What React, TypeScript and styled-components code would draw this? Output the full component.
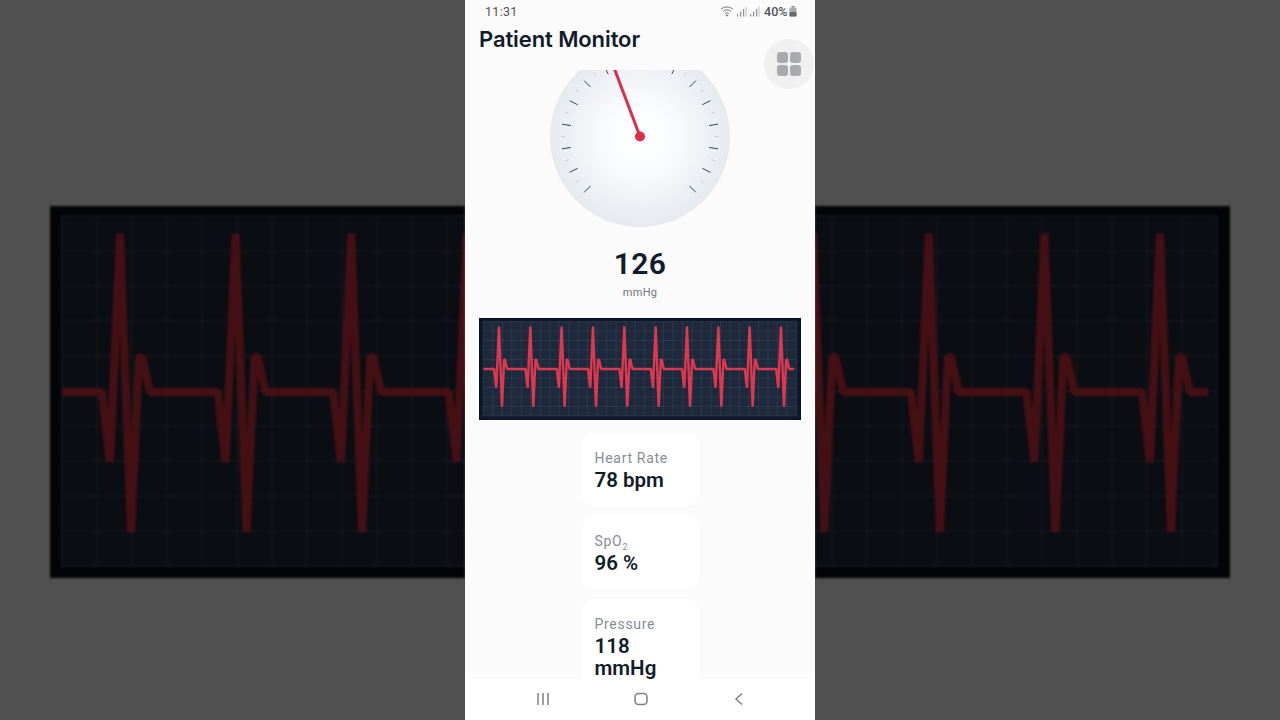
import styled, { createGlobalStyle } from 'styled-components';

const GlobalStyle = createGlobalStyle`
    html, body {
        margin: 0;
        padding: 0;
        height: 100%;
        background: #505050;
        font-family: 'Roboto', 'Liberation Sans', sans-serif;
    }
    * {
        box-sizing: border-box;
    }
`;

const Stage = styled.div`
    display: flex;
    width: 1280px;
    height: 720px;
    overflow: hidden;
    background: #505050;
`;

const SidePanel = styled.div<{ $side: 'left' | 'right' }>`
    flex: 1;
    display: flex;
    align-items: flex-start;
    justify-content: ${(props) => (props.$side === 'left' ? 'flex-end' : 'flex-start')};
    padding-top: 206px;
    overflow: hidden;
    svg {
        display: block;
        flex-shrink: 0;
        filter: blur(1.2px);
    }
`;

const Phone = styled.div`
    position: relative;
    width: 350px;
    height: 720px;
    display: flex;
    flex-direction: column;
    background: #fbfbfc;
`;

const StatusBar = styled.div`
    height: 22px;
    flex-shrink: 0;
    display: flex;
    align-items: center;
    justify-content: space-between;
    padding: 0 18px 0 20px;
    color: #50545a;
`;

const Clock = styled.span`
    font-size: 12.5px;
    letter-spacing: 0.3px;
`;

const StatusIcons = styled.div`
    display: flex;
    align-items: center;
    gap: 1.5px;
`;

const Percent = styled.span`
    font-size: 12.5px;
    font-weight: 500;
    margin-left: 3px;
`;

const Header = styled.header`
    height: 34px;
    flex-shrink: 0;
    padding: 0 14px;
    display: flex;
    align-items: center;
`;

const Title = styled.h1`
    margin: 0;
    font-family: 'Inter', 'Roboto', sans-serif;
    font-size: 22px;
    font-weight: 600;
    letter-spacing: -0.1px;
    color: #111c2b;
`;

const MenuButton = styled.div`
    position: absolute;
    top: 39px;
    right: 1px;
    width: 50px;
    height: 50px;
    border-radius: 50%;
    background: #f0f0f1;
    display: grid;
    grid-template-columns: 11px 11px;
    grid-auto-rows: 11px;
    gap: 2px;
    align-content: center;
    justify-content: center;
`;

const MenuDot = styled.span`
    background: #a8aaad;
    border-radius: 3px;
`;

const Content = styled.main`
    flex: 1;
    min-height: 0;
    overflow: hidden;
    margin-top: 14px;
    display: flex;
    flex-direction: column;
    align-items: center;
`;

const GaugeWrap = styled.div`
    width: 180px;
    height: 158px;
    flex-shrink: 0;
    overflow: hidden;
    svg {
        display: block;
    }
`;

const Reading = styled.div`
    margin-top: 18px;
    font-size: 30px;
    line-height: 36px;
    font-weight: 600;
    letter-spacing: 0.3px;
    color: #111c2b;
`;

const ReadingUnit = styled.div`
    margin-top: 4px;
    font-size: 11px;
    line-height: 14px;
    letter-spacing: 0.3px;
    color: #6e7580;
`;

const Strip = styled.div`
    width: 322px;
    height: 102px;
    flex-shrink: 0;
    margin-top: 18px;
    border: 1px solid #0b1220;
    background: #0f172a;
    svg {
        display: block;
        width: 100%;
        height: 100%;
        filter: blur(0.45px);
    }
`;

const Cards = styled.div`
    margin-top: 13px;
    display: flex;
    flex-direction: column;
    gap: 10px;
`;

const Card = styled.div`
    width: 119px;
    padding: 15px 13px 15px 14px;
    background: #ffffff;
    border-radius: 14px;
    box-shadow: 0 1px 4px rgba(15, 23, 42, 0.02);
`;

const CardLabel = styled.div`
    font-size: 14px;
    line-height: 20px;
    letter-spacing: 0.7px;
    margin-bottom: 1px;
    color: #868c96;
    sub {
        font-size: 9px;
        line-height: 0;
    }
`;

const CardValue = styled.div`
    font-size: 20.5px;
    line-height: 22px;
    font-weight: 600;
    color: #111c2b;
`;

const NavBar = styled.nav`
    height: 41px;
    flex-shrink: 0;
    background: #ffffff;
    display: grid;
    grid-template-columns: repeat(3, 98px);
    justify-content: center;
    justify-items: center;
    align-items: center;
    padding: 0 0 1px 2px;
`;

const PALETTES = {
    strip: { frame: '#0f172a', paper: '#1e293b', grid: '#2f3d52', trace: '#dc3850', gridWidth: 3, traceWidth: 9 },
    backdrop: { frame: '#030407', paper: '#0a0d12', grid: '#11151b', trace: '#451014', gridWidth: 2, traceWidth: 8 },
};

// trace in the coordinates of the big blurred copy, the strip just scales it down
const buildTrace = () => {
    let d = 'M63 392';
    for (let i = 0; i < 10; i++) {
        const x = 120 + i * 115.55;
        d += ` L${x - 18} 392 L${x - 10} 462 L${x} 234 L${x + 11} 532 L${x + 19} 357 L${x + 22} 357 L${x + 30} 392`;
    }
    return d + ' L1208 392';
};

const gridX = Array.from({ length: 34 }, (_, i) => 62 + i * 35);
const gridY = Array.from({ length: 11 }, (_, i) => 216 + i * 35);

function Ecg({ palette, viewBox }: { palette: 'strip' | 'backdrop'; viewBox: string }) {
    const c = PALETTES[palette];
    return (
        <svg viewBox={viewBox} width="415" height="372" preserveAspectRatio="none">
            <rect x="50" y="206" width="1180" height="372" fill={c.frame} />
            <rect x="62" y="216" width="1156" height="350" fill={c.paper} />
            {gridX.map((x) => (
                <line key={x} x1={x} x2={x} y1="216" y2="566" stroke={c.grid} strokeWidth={c.gridWidth} />
            ))}
            {gridY.map((y) => (
                <line key={y} x1="62" x2="1218" y1={y} y2={y} stroke={c.grid} strokeWidth={c.gridWidth} />
            ))}
            <path d={buildTrace()} fill="none" stroke={c.trace} strokeWidth={c.traceWidth} strokeLinejoin="bevel" />
        </svg>
    );
}

const polar = (deg: number, r: number) => {
    const a = ((deg - 90) * Math.PI) / 180;
    return { x: 90 + r * Math.cos(a), y: 66.5 + r * Math.sin(a) };
};

function Gauge() {
    const ticks = Array.from({ length: 31 }, (_, i) => i);
    const tip = polar(-20.7, 90);
    return (
        <svg width="180" height="158" viewBox="0 0 180 158">
            <defs>
                <radialGradient id="dial">
                    <stop offset="0" stopColor="#ffffff" />
                    <stop offset="0.35" stopColor="#fbfcfd" />
                    <stop offset="1" stopColor="#e6eaef" />
                </radialGradient>
            </defs>
            <circle cx="90" cy="67" r="90" fill="url(#dial)" />
            {ticks.map((i) => {
                const deg = -135 + i * 9;
                const major = i % 2 === 0;
                const a = polar(deg, major ? 70 : 75);
                const b = polar(deg, 79);
                return (
                    <line
                        key={i}
                        x1={a.x}
                        y1={a.y}
                        x2={b.x}
                        y2={b.y}
                        stroke={major ? '#3b4452' : '#c8ccd2'}
                        strokeWidth="1"
                    />
                );
            })}
            <line x1="90" y1="66.5" x2={tip.x} y2={tip.y} stroke="#d8304b" strokeWidth="3" />
            <circle cx="90" cy="66.5" r="5" fill="#dc2f4a" />
        </svg>
    );
}

function Wifi() {
    return (
        <svg width="15" height="12" viewBox="0 0 15 12" fill="none" stroke="#7a7d82" strokeWidth="1">
            <path d="M1 4.2a9 9 0 0 1 12 0" />
            <path d="M3 6.4a6 6 0 0 1 8 0" />
            <path d="M5 8.5a3 3 0 0 1 4 0" />
            <circle cx="7" cy="10.4" r="0.7" fill="#7a7d82" />
        </svg>
    );
}

function Signal() {
    return (
        <svg width="11" height="11" viewBox="0 0 11 11" fill="#8b8e92">
            <rect x="1" y="8" width="1.2" height="2.5" />
            <rect x="4" y="5.5" width="1.2" height="5" />
            <rect x="7" y="3" width="1.2" height="7.5" />
            <rect x="9.4" y="0.5" width="1.2" height="10" fill="#c8cacc" />
        </svg>
    );
}

function Battery() {
    return (
        <svg width="8" height="11" viewBox="0 0 8 11">
            <rect x="2.5" y="0" width="3" height="1.5" fill="#8a8c90" />
            <rect x="0.5" y="1.5" width="7" height="9" rx="1" fill="#a9abae" />
            <rect x="0.5" y="6" width="7" height="4.5" rx="1" fill="#66696e" />
        </svg>
    );
}

const readings = [
    { id: 'hr', label: <>Heart Rate</>, value: <>78 bpm</> },
    {
        id: 'spo2',
        label: (
            <>
                SpO<sub>2</sub>
            </>
        ),
        value: <>96 %</>,
    },
    { id: 'bp', label: <>Pressure</>, value: <>118 mmHg</> },
];

function App() {
    return (
        <Stage>
            <GlobalStyle />
            <SidePanel $side="left">
                <Ecg palette="backdrop" viewBox="50 206 415 372" />
            </SidePanel>
            <Phone>
                <StatusBar>
                    <Clock>11:31</Clock>
                    <StatusIcons>
                        <Wifi />
                        <Signal />
                        <Signal />
                        <Percent>40%</Percent>
                        <Battery />
                    </StatusIcons>
                </StatusBar>
                <Header>
                    <Title>Patient Monitor</Title>
                </Header>
                <MenuButton>
                    <MenuDot />
                    <MenuDot />
                    <MenuDot />
                    <MenuDot />
                </MenuButton>
                <Content>
                    <GaugeWrap>
                        <Gauge />
                    </GaugeWrap>
                    <Reading>126</Reading>
                    <ReadingUnit>mmHg</ReadingUnit>
                    <Strip>
                        <Ecg palette="strip" viewBox="50 206 1180 372" />
                    </Strip>
                    <Cards>
                        {readings.map((r) => (
                            <Card key={r.id}>
                                <CardLabel>{r.label}</CardLabel>
                                <CardValue>{r.value}</CardValue>
                            </Card>
                        ))}
                    </Cards>
                </Content>
                <NavBar>
                    <svg width="14" height="14" viewBox="0 0 14 14" stroke="#7d8084" strokeWidth="1.5">
                        <path d="M2 1v12M7 1v12M12 1v12" />
                    </svg>
                    <svg width="14" height="14" viewBox="0 0 14 14" fill="none" stroke="#7d8084" strokeWidth="1.5">
                        <rect x="1" y="1.5" width="12" height="11" rx="3.5" />
                    </svg>
                    <svg width="14" height="14" viewBox="0 0 14 14" fill="none" stroke="#7d8084" strokeWidth="1.5">
                        <path d="M10 1.5L4 7l6 5.5" />
                    </svg>
                </NavBar>
            </Phone>
            <SidePanel $side="right">
                <Ecg palette="backdrop" viewBox="815 206 415 372" />
            </SidePanel>
        </Stage>
    );
}

export default App;
